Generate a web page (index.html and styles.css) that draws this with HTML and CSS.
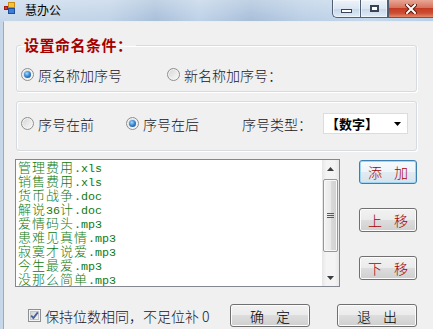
FILE: index.html
```html
<!DOCTYPE html>
<html lang="zh-CN">

<head>
  <meta charset="UTF-8">
  <title>慧办公</title>
  <link rel="stylesheet" href="styles.css">
</head>

<body>
  <div class="window">
    <div class="titlebar">
      <svg class="app-icon" width="11" height="12" viewBox="0 0 11 12">
        <rect x="0.5" y="4.5" width="3" height="3" fill="#e23a2a" stroke="#a01a10" />
        <rect x="4.5" y="0.5" width="6" height="5" fill="#f6c23c" stroke="#c88a10" />
        <rect x="4.5" y="6.5" width="6" height="5" fill="#3c7fd8" stroke="#1f4f9a" />
      </svg>
      <span class="title">慧办公</span>
      <div class="caption-btns">
        <div class="cap-btn cap-min"><span class="glyph-min"></span></div>
        <div class="cap-btn cap-max"><span class="glyph-max"></span></div>
        <div class="cap-btn cap-close">
          <svg width="12" height="10" viewBox="0 0 12 10">
            <path d="M2 1 L10 9 M10 1 L2 9" stroke="#5a1a10" stroke-width="4" stroke-linecap="square" />
            <path d="M2 1 L10 9 M10 1 L2 9" stroke="#fff" stroke-width="2" stroke-linecap="square" />
          </svg>
        </div>
      </div>
    </div>

    <div class="client">
      <fieldset class="group group-name">
        <legend>设置命名条件：</legend>
        <div class="row">
          <label class="opt"><span class="radio checked"></span>原名称加序号</label>
          <label class="opt opt-new"><span class="radio"></span>新名称加序号：</label>
        </div>
      </fieldset>

      <fieldset class="group group-order">
        <div class="row">
          <label class="opt opt-before"><span class="radio"></span>序号在前</label>
          <label class="opt opt-after"><span class="radio checked"></span>序号在后</label>
          <span class="type-label">序号类型：</span>
          <div class="combo">
            <span class="combo-text">【数字】</span>
            <svg class="combo-arrow" width="7" height="4" viewBox="0 0 7 4">
              <path d="M0 0 H7 L3.5 4 Z" fill="#000" />
            </svg>
          </div>
        </div>
      </fieldset>

      <div class="list-row">
        <div class="listbox">
          <ul class="items">
            <li>管理费用<span class="ext">.xls</span></li>
            <li>销售费用<span class="ext">.xls</span></li>
            <li>货币战争<span class="ext">.doc</span></li>
            <li>解说<span class="ext">36</span>计<span class="ext">.doc</span></li>
            <li>爱情码头<span class="ext">.mp3</span></li>
            <li>患难见真情<span class="ext">.mp3</span></li>
            <li>寂寞才说爱<span class="ext">.mp3</span></li>
            <li>今生最爱<span class="ext">.mp3</span></li>
            <li>没那么简单<span class="ext">.mp3</span></li>
          </ul>
          <div class="vscroll">
            <div class="scroll-arrow">
              <svg width="7" height="4" viewBox="0 0 7 4"><path d="M0 4 H7 L3.5 0 Z" fill="#3d3d3d" /></svg>
            </div>
            <div class="thumb"><span class="grip"></span></div>
            <div class="scroll-arrow">
              <svg width="7" height="4" viewBox="0 0 7 4"><path d="M0 0 H7 L3.5 4 Z" fill="#3d3d3d" /></svg>
            </div>
          </div>
        </div>
        <div class="side-btns">
          <button class="btn btn-red btn-default"><span>添加</span></button>
          <button class="btn btn-red"><span>上移</span></button>
          <button class="btn btn-red"><span>下移</span></button>
        </div>
      </div>

      <div class="footer">
        <label class="check-opt">
          <svg class="checkbox" width="13" height="13" viewBox="0 0 13 13">
            <defs>
              <linearGradient id="cbg" x1="0" y1="0" x2="1" y2="1">
                <stop offset="0" stop-color="#cbcfd5" />
                <stop offset="1" stop-color="#f6f6f6" />
              </linearGradient>
            </defs>
            <rect x="0.5" y="0.5" width="12" height="12" fill="#f4f4f4" stroke="#8e8f8f" />
            <rect x="2.5" y="2.5" width="8" height="8" fill="url(#cbg)" stroke="#c0c4ca" />
            <path d="M3.2 6.6 L5.4 9 L9.8 3.4" fill="none" stroke="#4a5f97" stroke-width="1.8" />
          </svg>
          保持位数相同，不足位补 0
        </label>
        <button class="btn btn-ok"><span>确定</span></button>
        <button class="btn btn-exit"><span>退出</span></button>
      </div>
    </div>
  </div>
</body>

</html>
```

FILE: styles.css
```css
/* General */
body {
  margin: 0;
  font-family: "Noto Sans CJK SC", sans-serif;
  font-weight: 300;
  color: #141428;
}

.window {
  width: 433px;
  height: 329px;
  display: flex;
  flex-direction: column;
  overflow: hidden;
  background:
    linear-gradient(to bottom, rgba(255, 255, 255, 0.3), rgba(255, 255, 255, 0) 22px),
    linear-gradient(to right, #c6d7ea 0%, #bfd2e7 25%, #a7bfd9 36%, #bdd1e7 46%, #a6bed9 58%, #b9cee5 70%, #c4d7eb 85%, #b8cee6 100%);
}

/* Title bar */
.titlebar {
  height: 21px;
  flex-shrink: 0;
  display: flex;
  align-items: flex-start;
}

.app-icon {
  margin: 2px 0 0 4px;
}

.title {
  margin: 2px 0 0 10px;
  font-size: 12px;
  font-weight: 400;
  line-height: 15px;
  color: #000;
}

.caption-btns {
  margin-left: auto;
  display: flex;
  height: 18px;
}

.cap-btn {
  height: 17px;
  border: 1px solid #4f5f74;
  border-top: none;
  display: flex;
  align-items: center;
  justify-content: center;
}

.cap-min,
.cap-max {
  width: 27px;
  background: linear-gradient(to bottom, rgba(255, 255, 255, 0.6), rgba(235, 242, 250, 0.45) 50%, rgba(190, 208, 228, 0.45) 51%, rgba(235, 242, 250, 0.7));
  box-shadow: inset 0 0 0 1px rgba(255, 255, 255, 0.5);
}

.cap-min {
  border-bottom-left-radius: 5px;
  border-right: none;
}

.cap-max {
  width: 26px;
}

.glyph-min {
  width: 9px;
  height: 2px;
  margin-top: 5px;
  background: #fff;
  border: 1px solid #394556;
}

.glyph-max {
  width: 7px;
  height: 5px;
  background: #fff;
  border: 1px solid #394556;
  box-shadow: inset 0 0 0 1px #394556, inset 0 0 0 2px #fff;
}

.cap-close {
  width: 44px;
  border-right: none;
  background: linear-gradient(to bottom, #e9a695, #d7735e 45%, #c43b22 50%, #cc4f34 78%, #e48a6a);
}

/* Client area */
.client {
  flex: 1;
  margin-left: 3px;
  border-top: 1px solid #e8eef5;
  border-left: 1px solid #98abc2;
  background: #f0f0f0;
  padding: 0 16px 0 11px;
  font-size: 14px;
}

.group {
  width: 401px;
  box-sizing: border-box;
  margin: 0 0 0 1px;
  border: 1px solid #d5dbe0;
  border-radius: 3px;
  box-shadow: inset 1px 1px 0 #fff, 1px 1px 0 #fff;
  min-inline-size: 0;
}

.group-name {
  margin-top: 14px;
  padding: 10px 8px 6px 4px;
}

.group-name legend {
  padding: 0 3px;
  font-size: 15px;
  font-weight: bold;
  line-height: 18px;
  letter-spacing: 0.5px;
  color: #a50000;
}

.group-order {
  margin-top: 9px;
  padding: 11px 8px 16px 4px;
}

.row {
  display: flex;
  align-items: center;
  height: 21px;
}

.opt {
  display: flex;
  align-items: center;
  line-height: 16px;
  white-space: nowrap;
}

.opt-new {
  margin-left: 45px;
}

.opt-after {
  margin-left: 32px;
}

.radio {
  width: 13px;
  height: 13px;
  box-sizing: border-box;
  margin-right: 4px;
  border: 1px solid #8e8f8f;
  border-radius: 50%;
  background: linear-gradient(135deg, #d4d4d4, #fcfcfc);
  box-shadow: inset 0 0 0 1px #f4f4f4;
  position: relative;
}

.radio.checked::after {
  content: "";
  position: absolute;
  inset: 2px;
  border-radius: 50%;
  background: radial-gradient(circle at 40% 35%, #a8dcfb 0%, #3a8ad6 45%, #0d3f7c 100%);
}

.type-label {
  margin-left: auto;
  margin-right: 11px;
  line-height: 16px;
}

.combo {
  width: 85px;
  height: 21px;
  box-sizing: border-box;
  border: 1px solid #dcdcdc;
  background: #fff;
  display: flex;
  align-items: center;
  padding: 0 6px 0 2px;
}

.combo-text {
  font-size: 13px;
  font-weight: bold;
  line-height: 16px;
  color: #000;
}

.combo-arrow {
  margin-left: auto;
}

/* List */
.list-row {
  margin-top: 8px;
  display: flex;
  justify-content: space-between;
}

.listbox {
  width: 325px;
  height: 128px;
  box-sizing: border-box;
  border: 1px solid #828790;
  background: #fff;
  display: flex;
}

.items {
  flex: 1;
  margin: 0;
  padding: 0 0 0 2px;
  list-style: none;
  color: #0f7a0f;
  font-size: 13px;
  line-height: 14px;
  letter-spacing: 1px;
}

.items li {
  height: 14px;
  white-space: nowrap;
}

.ext {
  font-family: "Liberation Mono", monospace;
  font-size: 11.7px;
  line-height: 12px;
  letter-spacing: 0;
}

.vscroll {
  width: 17px;
  display: flex;
  flex-direction: column;
  background: linear-gradient(to right, #e6e6e6, #f4f4f4 25%, #f4f4f4 75%, #e8e8e8);
}

.scroll-arrow {
  height: 17px;
  display: flex;
  align-items: center;
  justify-content: center;
}

.thumb {
  height: 73px;
  margin: 2px 1px 0;
  border: 1px solid #979797;
  border-radius: 2px;
  box-sizing: border-box;
  background: linear-gradient(to right, #f3f3f3, #e9e9e9 50%, #dadada 51%, #d0d0d0);
  box-shadow: inset 0 0 0 1px #f8f8f8;
  display: flex;
  align-items: center;
  justify-content: center;
}

.grip {
  width: 7px;
  height: 5px;
  background: repeating-linear-gradient(to bottom, #5a5a5a 0 1px, transparent 1px 2px);
}

.vscroll .scroll-arrow:last-child {
  margin-top: auto;
}

/* Buttons */
.side-btns {
  display: flex;
  flex-direction: column;
  gap: 24px;
  padding-top: 1px;
}

.btn {
  height: 24px;
  box-sizing: border-box;
  border: 1px solid #707070;
  border-radius: 3px;
  background: linear-gradient(to bottom, #f2f2f2, #ebebeb 49%, #dddddd 50%, #cfcfcf);
  box-shadow: inset 0 0 0 1px #fcfcfc;
  font-family: "Noto Sans CJK SC", sans-serif;
  font-size: 14px;
  font-weight: 300;
  line-height: 16px;
  padding: 0;
  white-space: nowrap;
  color: #000;
}

.btn span {
  letter-spacing: 12px;
  margin-right: -12px;
}

.side-btns .btn {
  width: 58px;
}

.btn-red {
  color: #a50000;
}

.btn-default {
  border-color: #3c7fb1;
  background: linear-gradient(to bottom, #f6fafd, #eef4f9 49%, #e2ebf2 50%, #d6e2ec);
  box-shadow: inset 0 0 0 1px #9fd6f3;
}

/* Footer */
.footer {
  margin-top: 17px;
  display: flex;
  align-items: center;
}

.check-opt {
  display: flex;
  align-items: center;
  margin-left: 13px;
  line-height: 16px;
  white-space: nowrap;
}

.checkbox {
  margin-right: 4px;
}

.btn-ok,
.btn-exit {
  width: 80px;
  height: 23px;
}

.btn-ok {
  margin-left: auto;
  margin-right: 27px;
}
```
